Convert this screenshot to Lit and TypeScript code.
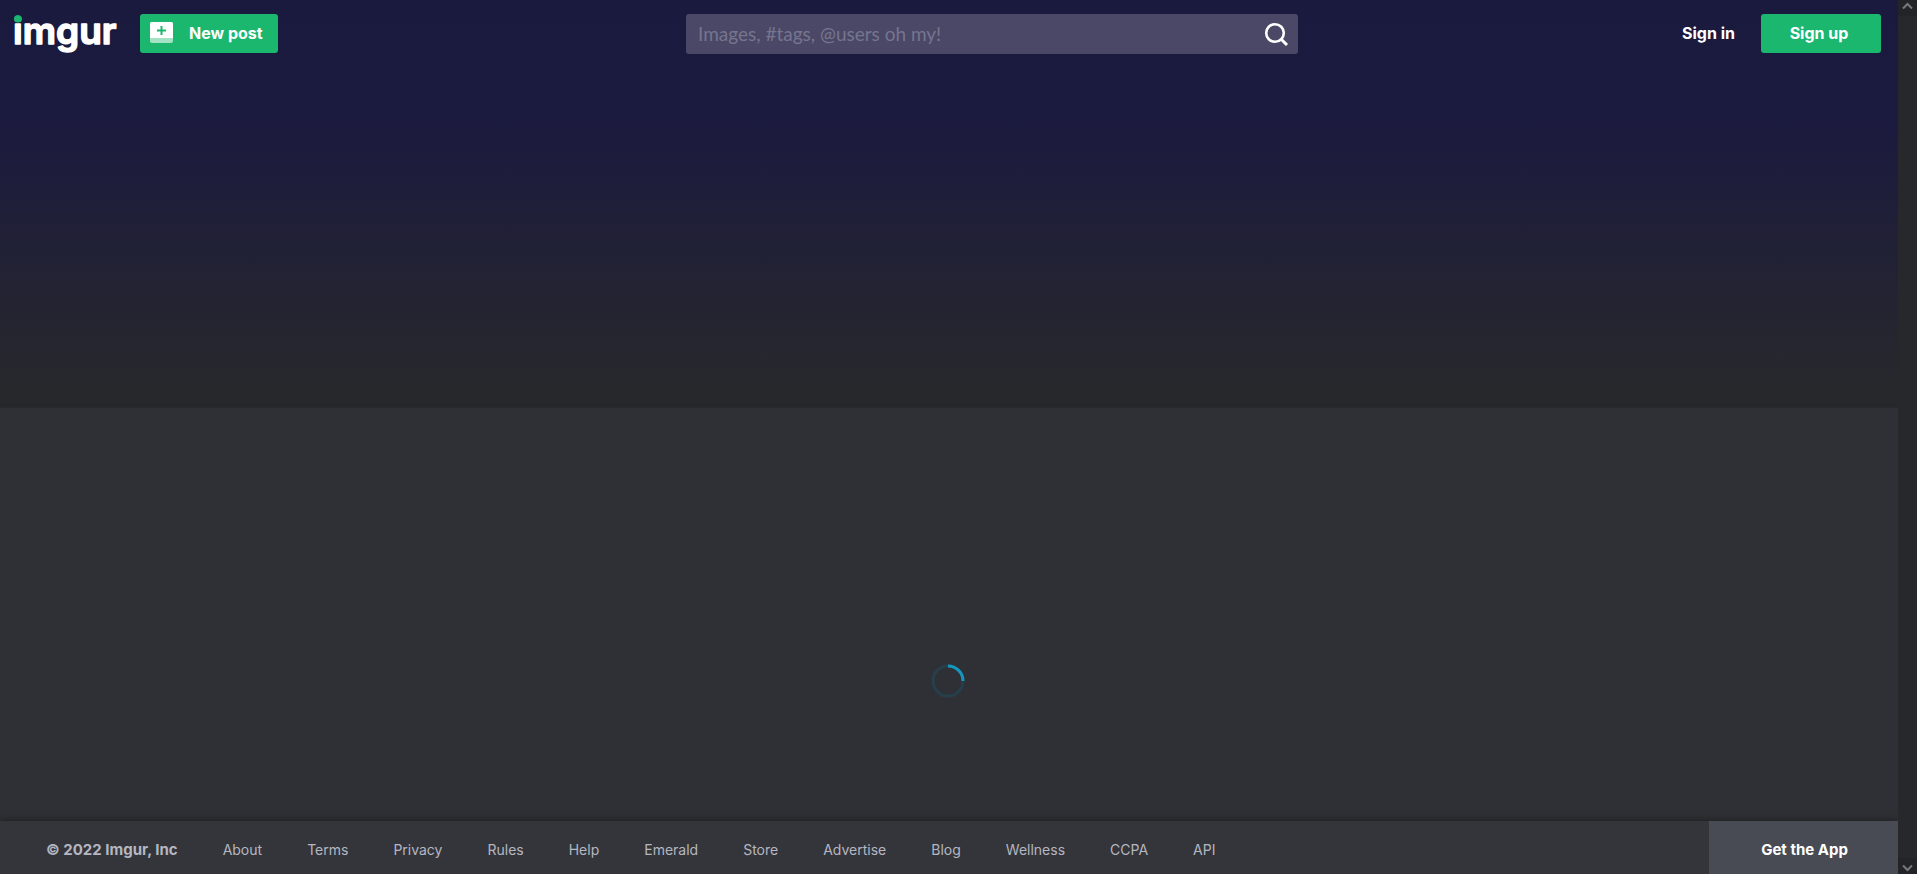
import { LitElement, html, css } from "lit";
import { customElement } from "lit/decorators.js";

const LINKS = ["About", "Terms", "Privacy", "Rules", "Help", "Emerald", "Store", "Advertise", "Blog", "Wellness", "CCPA", "API"];

@customElement("app-root")
export class AppRoot extends LitElement {
  static styles = css`
    :host {
      display: flex;
      height: 100vh;
      overflow: hidden;
      background: #27282c;
      color: #fff;
      font-family: Inter, "Open Sans", sans-serif;
    }
    * { box-sizing: border-box; }
    a { color: inherit; text-decoration: none; }
    button { border: 0; padding: 0; font: inherit; color: inherit; cursor: pointer; }
    .page {
      flex: 1;
      min-width: 0;
      display: flex;
      flex-direction: column;
      background: linear-gradient(#1a1a3e 0, #1b1a3f 120px, #27282c 386px);
    }
    .header {
      display: flex;
      justify-content: space-between;
      align-items: flex-start;
      padding: 14px 17px 0 12px;
      margin-bottom: 349px;
    }
    .left { display: flex; align-items: flex-start; padding-right: 24px; }
    .right { display: flex; justify-content: flex-end; gap: 26px; }
    .logo { display: block; margin-right: 16px; }
    .logo svg, .search svg, .post svg { display: block; }
    .logo svg { overflow: visible; }
    .logo text {
      font: 600 37px Inter, sans-serif;
      fill: #fff;
      stroke: #fff;
      stroke-width: 1.5px;
      stroke-linejoin: round;
    }
    .logo tspan { fill: url(#stem); stroke: url(#stem); }
    .post, .signup {
      height: 39px;
      border-radius: 3px;
      background: #1bb76e;
      font-weight: 700;
      font-size: 16px;
      line-height: 38px;
    }
    .post { display: flex; width: 138px; padding: 8px 10px; gap: 16px; line-height: 22px; white-space: nowrap; }
    .signup { width: 120px; text-align: center; padding-right: 4px; }
    .signin { font-weight: 700; font-size: 16px; line-height: 38px; }
    .search {
      display: flex;
      align-items: center;
      flex: 0 1 612px;
      height: 40px;
      border-radius: 3px;
      background: #4a4866;
      padding: 0 9px 0 12px;
    }
    .search input {
      flex: 1;
      min-width: 0;
      border: 0;
      outline: 0;
      padding: 0 0 2px;
      background: none;
      color: #fff;
      font: 19px Lato, sans-serif;
    }
    .search input::placeholder { color: #76758f; opacity: 1; }
    .search button { background: none; }
    .content {
      flex: 1;
      display: flex;
      justify-content: center;
      align-items: center;
      padding: 132px 2px 0 0;
      background: #2e3035;
      box-shadow: 0 0 3px #2b2c30;
    }
    .footer {
      display: flex;
      justify-content: space-between;
      height: 53px;
      background: #34353a;
      box-shadow: 0 0 8px rgba(0, 0, 0, 0.45);
      font-size: 14px;
      line-height: 20px;
      clip-path: inset(-12px 0 0 0);
    }
    .links { display: flex; align-items: center; gap: 45px; padding: 4px 0 0 46px; color: #b4b7c1; white-space: nowrap; }
    .copy, .app { font-weight: 700; font-size: 15px; }
    .app {
      width: 189px;
      padding: 4px 0 0 2px;
      background: #484b53;
    }
    .rail {
      width: 19px;
      display: flex;
      flex-direction: column;
      justify-content: space-between;
      background: #27282c;
    }
    .rail svg { display: block; background: #232428; }
  `;

  render() {
    return html`
      <div class="page">
        <header class="header">
          <div class="left">
            <a class="logo" href="#" aria-label="imgur">
              <svg width="112" height="45" viewBox="0 0 112 45">
                <defs>
                  <linearGradient id="stem" gradientUnits="userSpaceOnUse" x1="0" y1="0" x2="0" y2="45">
                    <stop offset="0.200" stop-color="#1bb76e" />
                    <stop offset="0.200" stop-color="#fff" />
                  </linearGradient>
                </defs>
                <text x="1" y="30"><tspan>i</tspan>mgur</text>
                <ellipse cx="6" cy="5" rx="4" ry="3.5" fill="#1bb76e" />
              </svg>
            </a>
            <button class="post">
              <svg width="23" height="21" viewBox="0 0 23 21">
                <rect width="23" height="21" rx="2" fill="#a4e2c5" />
                <path d="M2 0h19a2 2 0 0 1 2 2v14H0V2a2 2 0 0 1 2-2z" fill="#fff" />
                <path d="M11.5 4v9M7 8.500h9" stroke="#1bb76e" stroke-width="2" />
              </svg>
              <span>New post</span>
            </button>
          </div>
          <form class="search" role="search">
            <input type="text" aria-label="Search" placeholder="Images, #tags, @users oh my!" />
            <button type="button" aria-label="Submit search">
              <svg width="25" height="24" viewBox="0 0 25 24" fill="none" stroke="#fff" stroke-width="2.600">
                <circle cx="11" cy="11" r="8.800" />
                <path d="M17 17l6 6" stroke-width="3" />
              </svg>
            </button>
          </form>
          <div class="right">
            <a class="signin" href="#">Sign in</a>
            <a class="signup" href="#">Sign up</a>
          </div>
        </header>
        <main class="content">
          <svg width="34" height="34" viewBox="0 0 34 34" fill="none" stroke-width="3" role="img" aria-label="Loading">
            <circle cx="17" cy="17" r="15" stroke="#273f4b" />
            <path d="M17 2A15 15 0 0 1 32 17" stroke="#1496bd" />
          </svg>
        </main>
        <footer class="footer">
          <nav class="links">
            <span class="copy">© 2022 Imgur, Inc</span>
            ${LINKS.map((l) => html`<a href="#">${l}</a>`)}
          </nav>
          <button class="app">Get the App</button>
        </footer>
      </div>
      <div class="rail" aria-hidden="true">
        <svg width="19" height="16" viewBox="0 0 19 16" fill="none" stroke="#77787b" stroke-width="2"><path d="M5 8.500l4.500-4.500L14 8.500" /></svg>
        <svg width="19" height="16" viewBox="0 0 19 16" fill="none" stroke="#77787b" stroke-width="2"><path d="M5 7.500l4.500 4.500L14 7.500" /></svg>
      </div>
    `;
  }
}
